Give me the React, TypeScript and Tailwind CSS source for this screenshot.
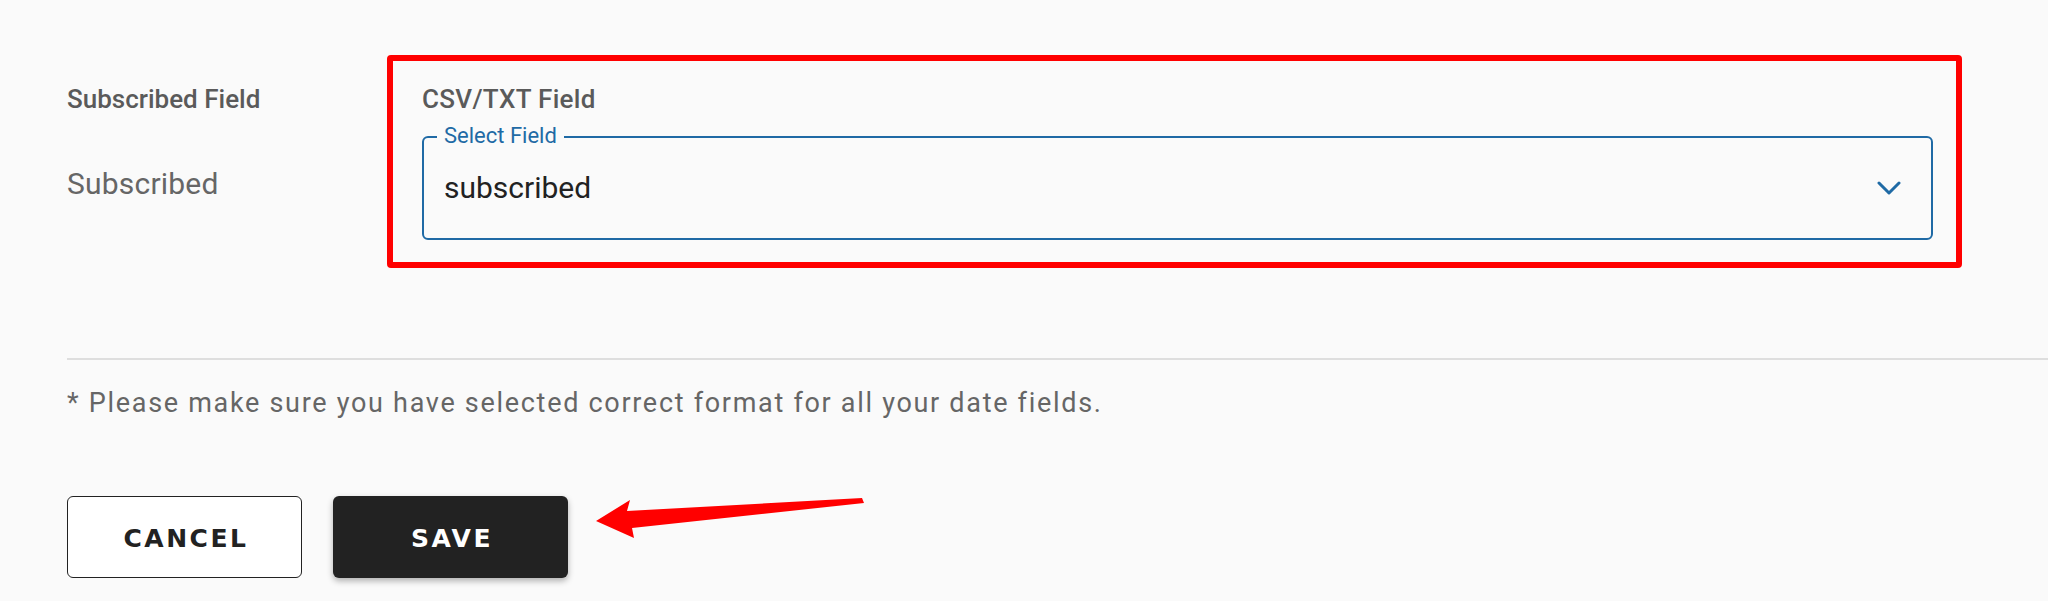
import React from "react";

function Chevron() {
  return (
    <svg width="24" height="14" viewBox="0 0 24 14" fill="none">
      <polyline
        points="2,2 12,12 22,2"
        stroke="#1f6aa5"
        strokeWidth="3"
        strokeLinecap="round"
        strokeLinejoin="round"
      />
    </svg>
  );
}

function Arrow() {
  return (
    <svg width="270" height="42" viewBox="594 499 270 42" className="mt-[1px] ml-[26px] shrink-0">
      <polygon
        points="596,523 630,502 627,513 862,500 864,505 632,530 634,540"
        fill="#ff0000"
      />
    </svg>
  );
}

export default function App() {
  return (
    <div className="min-h-[601px] w-full bg-[#fafafa] font-['Roboto',sans-serif] pl-[67px] overflow-hidden">
      <div className="flex items-start pt-[55px]">
        <div className="w-[320px] shrink-0 pt-[29px]">
          <p className="text-[26px] leading-[30px] font-medium text-[#5a5a5a]">Subscribed Field</p>
          <p className="mt-[52px] text-[30px] leading-[36px] tracking-[0.2px] text-[#666]">Subscribed</p>
        </div>
        <div className="w-[1575px] shrink-0 border-[6px] border-[#ff0000] rounded-[4px] pl-[29px] pr-[23px] pt-[23px] pb-[22px]">
          <p className="text-[26px] leading-[30px] font-medium tracking-[0.3px] text-[#5a5a5a]">CSV/TXT Field</p>
          <div className="relative mt-[22px] h-[104px] border-[2.5px] border-[#1f6aa5] rounded-[6px] flex items-center justify-between pl-[20px] pr-[30px]">
            <span className="absolute -top-[14px] left-[13px] px-[7px] bg-[#fafafa] text-[22px] leading-[24px] text-[#1f6aa5]">
              Select Field
            </span>
            <span className="text-[30px] leading-[36px] text-[#222]">subscribed</span>
            <Chevron />
          </div>
        </div>
      </div>

      <div className="mt-[90px] h-[2px] bg-[#dedede]" />

      <p className="mt-[27px] text-[27px] leading-[32px] tracking-[1.7px] text-[#666]">
        * Please make sure you have selected correct format for all your date fields.
      </p>

      <div className="mt-[77px] flex items-start">
        <button className="w-[235px] h-[82px] rounded-[6px] border-[1.5px] border-[#222] bg-white pl-[3px] pt-[3px] font-['DejaVu_Sans',sans-serif] font-bold text-[25px] tracking-[2.5px] text-[#222]">
          CANCEL
        </button>
        <button className="ml-[31px] w-[235px] h-[82px] rounded-[6px] bg-[#222] shadow-[0_3px_6px_rgba(0,0,0,0.3)] pl-[3px] pt-[3px] font-['DejaVu_Sans',sans-serif] font-bold text-[25px] tracking-[2.5px] text-white">
          SAVE
        </button>
        <Arrow />
      </div>
    </div>
  );
}
